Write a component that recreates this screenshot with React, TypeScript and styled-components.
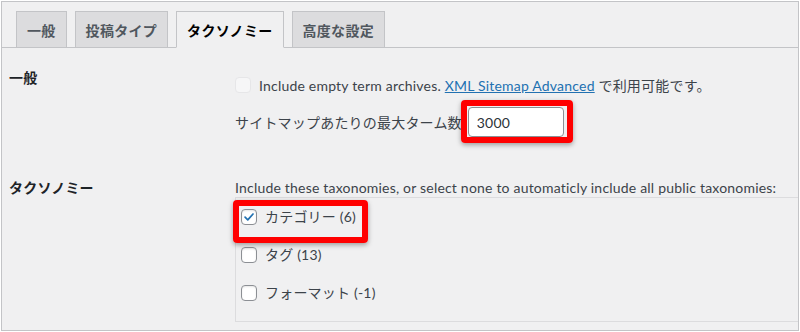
import React from "react";
import styled, { createGlobalStyle, css } from "styled-components";

const FONT = `"Lato", "Noto Sans CJK JP", sans-serif`;

const GlobalStyle = createGlobalStyle`
  html, body { margin: 0; padding: 0; background: #ffffff; }
  body { font-family: ${FONT}; }
`;

const Frame = styled.div`
  margin: 1px;
  width: 798px;
  height: 330px;
  box-sizing: border-box;
  border: 1px solid #c3c4c7;
  background: #f0f0f1;
  overflow: hidden;
  font-family: ${FONT};
  font-size: 14px;
  letter-spacing: 0.2px;
  color: #3c434a;
`;

const TabBar = styled.nav`
  display: flex;
  gap: 8px;
  padding: 9px 0 0 14px;
  border-bottom: 1px solid #c3c4c7;
`;

const Tab = styled.div<{ $active?: boolean }>`
  box-sizing: border-box;
  height: 37px;
  margin-bottom: -1px;
  padding: 0 10px;
  display: flex;
  align-items: center;
  border: 1px solid #c3c4c7;
  background: #dcdcde;
  color: #50575e;
  font-size: 14px;
  font-weight: 700;
  letter-spacing: 0.3px;
  white-space: nowrap;
  ${(p) =>
    p.$active &&
    css`
      background: #f0f0f1;
      border-bottom-color: #f0f0f1;
      color: #000000;
    `}
`;

const Content = styled.div`
  padding-left: 7px;
`;

const FormRow = styled.div<{ $bottom?: number }>`
  display: grid;
  grid-template-columns: 226px 1fr;
  padding-bottom: ${(p) => p.$bottom ?? 0}px;
`;

const RowLabel = styled.div<{ $top: number }>`
  padding-top: ${(p) => p.$top}px;
  line-height: 18px;
  font-weight: 700;
  color: #1d2327;
`;

const Cell = styled.div<{ $top: number }>`
  padding-top: ${(p) => p.$top}px;
  min-width: 0;
`;

const Line = styled.div<{ $gap?: number; $mt?: number; $h?: number }>`
  display: flex;
  align-items: center;
  gap: ${(p) => p.$gap ?? 0}px;
  margin-top: ${(p) => p.$mt ?? 0}px;
  height: ${(p) => p.$h ?? 20}px;
  white-space: nowrap;
`;

const Desc = styled.div`
  line-height: 18px;
  white-space: nowrap;
`;

const Link = styled.a`
  color: #2271b1;
  text-decoration: underline;
`;

const Box = styled.span<{ $checked?: boolean; $disabled?: boolean }>`
  box-sizing: border-box;
  flex: none;
  width: 16px;
  height: 16px;
  border-radius: 4px;
  border: 1px solid #8c8f94;
  background: #ffffff;
  box-shadow: inset 0 1px 2px rgba(0, 0, 0, 0.1);
  display: inline-flex;
  align-items: center;
  justify-content: center;
  ${(p) =>
    p.$disabled &&
    css`
      border-color: #e6e6e8;
      background: #f6f6f7;
      box-shadow: none;
    `}
`;

const NumberInput = styled.input`
  box-sizing: border-box;
  width: 96px;
  height: 30px;
  padding: 0 8px;
  border: 1px solid #8c8f94;
  border-radius: 4px;
  background: #ffffff;
  font-family: ${FONT};
  font-size: 14px;
  letter-spacing: 0.2px;
  color: #2c3338;
  outline: none;
`;

const Highlight = styled.span<{ $inset: string }>`
  position: relative;
  display: inline-flex;
  align-items: center;
  &::after {
    content: "";
    position: absolute;
    inset: ${(p) => p.$inset};
    border: 6px solid #ff0000;
    border-radius: 4px;
    box-shadow: 0 2px 5px rgba(0, 0, 0, 0.35);
    pointer-events: none;
  }
`;

const TermList = styled.ul`
  list-style: none;
  margin: 0;
  padding: 0 0 9px 5px;
  border: 1px solid #dcdcde;
  border-right: none;
`;

const TermItem = styled.li`
  height: 38px;
  display: flex;
  align-items: center;
`;

const TermLabel = styled.span`
  display: inline-flex;
  align-items: center;
  gap: 8px;
  line-height: 20px;
  white-space: nowrap;
`;

const Check = ({ checked, disabled }: { checked?: boolean; disabled?: boolean }) => (
  <Box $checked={checked} $disabled={disabled}>
    {checked && (
      <svg width="14" height="14" viewBox="0 0 16 16">
        <polyline
          points="3.5,8.2 6.6,11.2 12.6,4.6"
          fill="none"
          stroke="#2271b1"
          strokeWidth="2"
          strokeLinecap="round"
          strokeLinejoin="round"
        />
      </svg>
    )}
  </Box>
);

const tabs = ["一般", "投稿タイプ", "タクソノミー", "高度な設定"];
const terms = [
  { name: "カテゴリー (6)", checked: true },
  { name: "タグ (13)", checked: false },
  { name: "フォーマット (-1)", checked: false },
];

export default function App() {
  return (
    <>
      <GlobalStyle />
      <Frame>
        <TabBar>
          {tabs.map((t, i) => (
            <Tab key={t} $active={i === 2}>
              {t}
            </Tab>
          ))}
        </TabBar>
        <Content>
          <FormRow $bottom={20}>
            <RowLabel $top={21}>一般</RowLabel>
            <Cell $top={27}>
              <Line $gap={8}>
                <Check disabled />
                <span>
                  Include empty term archives. <Link>XML Sitemap Advanced</Link> で利用可能です。
                </span>
              </Line>
              <Line $gap={6} $mt={12} $h={30}>
                <span>サイトマップあたりの最大ターム数</span>
                <Highlight $inset="-7px -9px -6px -7px">
                  <NumberInput readOnly value="3000" />
                </Highlight>
              </Line>
            </Cell>
          </FormRow>
          <FormRow>
            <RowLabel $top={22}>タクソノミー</RowLabel>
            <Cell $top={22}>
              <Desc>
                Include these taxonomies, or select none to automaticly include all public taxonomies:
              </Desc>
              <TermList>
                {terms.map((term) => {
                  const label = (
                    <TermLabel>
                      <Check checked={term.checked} />
                      <span>{term.name}</span>
                    </TermLabel>
                  );
                  return (
                    <TermItem key={term.name}>
                      {term.checked ? (
                        <Highlight $inset="-7px -12px -16px -8px">{label}</Highlight>
                      ) : (
                        label
                      )}
                    </TermItem>
                  );
                })}
              </TermList>
            </Cell>
          </FormRow>
        </Content>
      </Frame>
    </>
  );
}
